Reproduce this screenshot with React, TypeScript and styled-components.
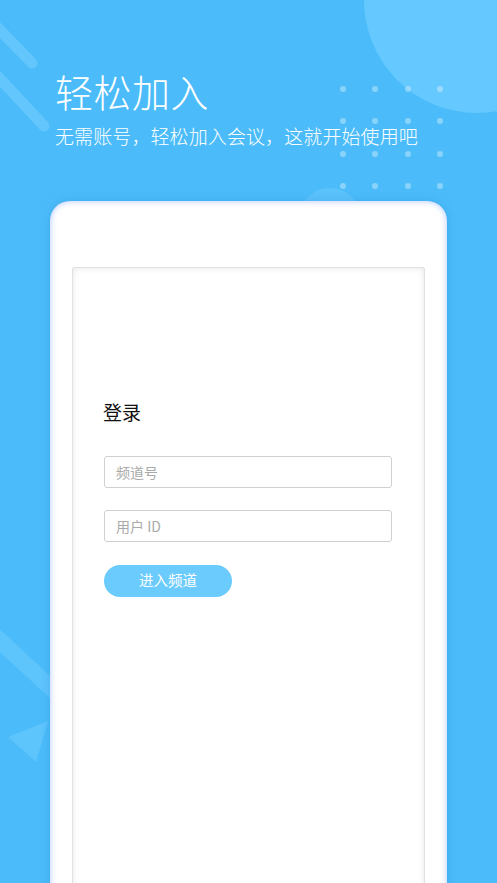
import React from "react";
import styled, { createGlobalStyle } from "styled-components";

const GlobalStyle = createGlobalStyle`
  html, body {
    margin: 0;
    padding: 0;
    background: #4bbcf9;
  }
  * {
    box-sizing: border-box;
  }
`;

const Page = styled.div`
  position: relative;
  width: 497px;
  height: 883px;
  overflow: hidden;
  background: #4bbcf9;
  font-family: "Noto Sans CJK SC", "Noto Sans", sans-serif;
`;

const Decor = styled.svg`
  position: absolute;
  top: 0;
  left: 0;
  pointer-events: none;
`;

const Header = styled.header`
  position: relative;
  padding: 68px 0 0 55px;
  color: #ffffff;
`;

const Title = styled.h1`
  margin: 0;
  font-size: 38px;
  line-height: 46px;
  font-weight: 300;
  letter-spacing: 0.5px;
`;

const Subtitle = styled.p`
  margin: 9px 0 0;
  font-size: 19px;
  line-height: 26px;
  font-weight: 300;
  letter-spacing: 0.1px;
`;

const Card = styled.main`
  position: relative;
  margin: 52px 50px 0;
  height: 720px;
  background: #ffffff;
  border-radius: 20px;
  padding: 66px 22px 0;
  box-shadow: inset 0 0 6px rgba(110, 150, 255, 0.55),
    0 0 10px rgba(20, 90, 170, 0.18);
`;

const Panel = styled.section`
  height: 700px;
  border: 1px solid #e2e2e2;
  border-radius: 2px;
  box-shadow: inset 0 0 6px rgba(0, 0, 0, 0.1);
  padding: 130px 33px 0 30px;
  display: flex;
  flex-direction: column;
  align-items: flex-start;
`;

const Heading = styled.h2`
  margin: 0 0 30px;
  font-size: 19px;
  line-height: 28px;
  font-weight: 400;
  color: #111111;
`;

const Field = styled.input`
  width: 288px;
  height: 32px;
  margin: 0 0 22px 1px;
  padding: 0 11px;
  border: 1px solid #d0d0d0;
  border-radius: 3px;
  font-family: "Noto Sans CJK SC", "Noto Sans", sans-serif;
  font-size: 14px;
  color: #333333;
  outline: none;
  &::placeholder {
    color: #a9a9a9;
  }
`;

const JoinButton = styled.button`
  margin: 1px 0 0 1px;
  width: 128px;
  height: 32px;
  padding: 0 0 2px;
  border: none;
  border-radius: 16px;
  background: #6bcbfd;
  color: #ffffff;
  font-family: "Noto Sans CJK SC", "Noto Sans", sans-serif;
  font-size: 14.5px;
  line-height: 30px;
  cursor: pointer;
`;

const dotsX = [343, 375, 408, 440];
const dotsY = [89, 121, 154, 186];

const App: React.FC = () => {
  return (
    <>
      <GlobalStyle />
      <Page>
        <Decor width="497" height="883" viewBox="0 0 497 883">
          <circle cx="477" cy="0" r="113" fill="#65c8fe" />
          <circle cx="330" cy="219" r="31" fill="#5bc2fb" />
          <line x1="-10" y1="20" x2="32" y2="63" stroke="#63c6fd" strokeWidth="11" strokeLinecap="round" />
          <line x1="-10" y1="68" x2="44" y2="126" stroke="#63c6fd" strokeWidth="11" strokeLinecap="round" />
          {dotsY.map((y) =>
            dotsX.map((x) => (
              <circle key={`${x}-${y}`} cx={x} cy={y} r="3" fill="#ffffff" opacity="0.35" />
            ))
          )}
          <polygon points="-10,620 -10,643 50,698 50,676" fill="#5ec4fc" />
          <polygon points="8,737 48,721 36,762" fill="#5ec4fc" />
        </Decor>
        <Header>
          <Title>轻松加入</Title>
          <Subtitle>无需账号，轻松加入会议，这就开始使用吧</Subtitle>
        </Header>
        <Card>
          <Panel>
            <Heading>登录</Heading>
            <Field placeholder="频道号" />
            <Field placeholder="用户 ID" />
            <JoinButton>进入频道</JoinButton>
          </Panel>
        </Card>
      </Page>
    </>
  );
};

export default App;
